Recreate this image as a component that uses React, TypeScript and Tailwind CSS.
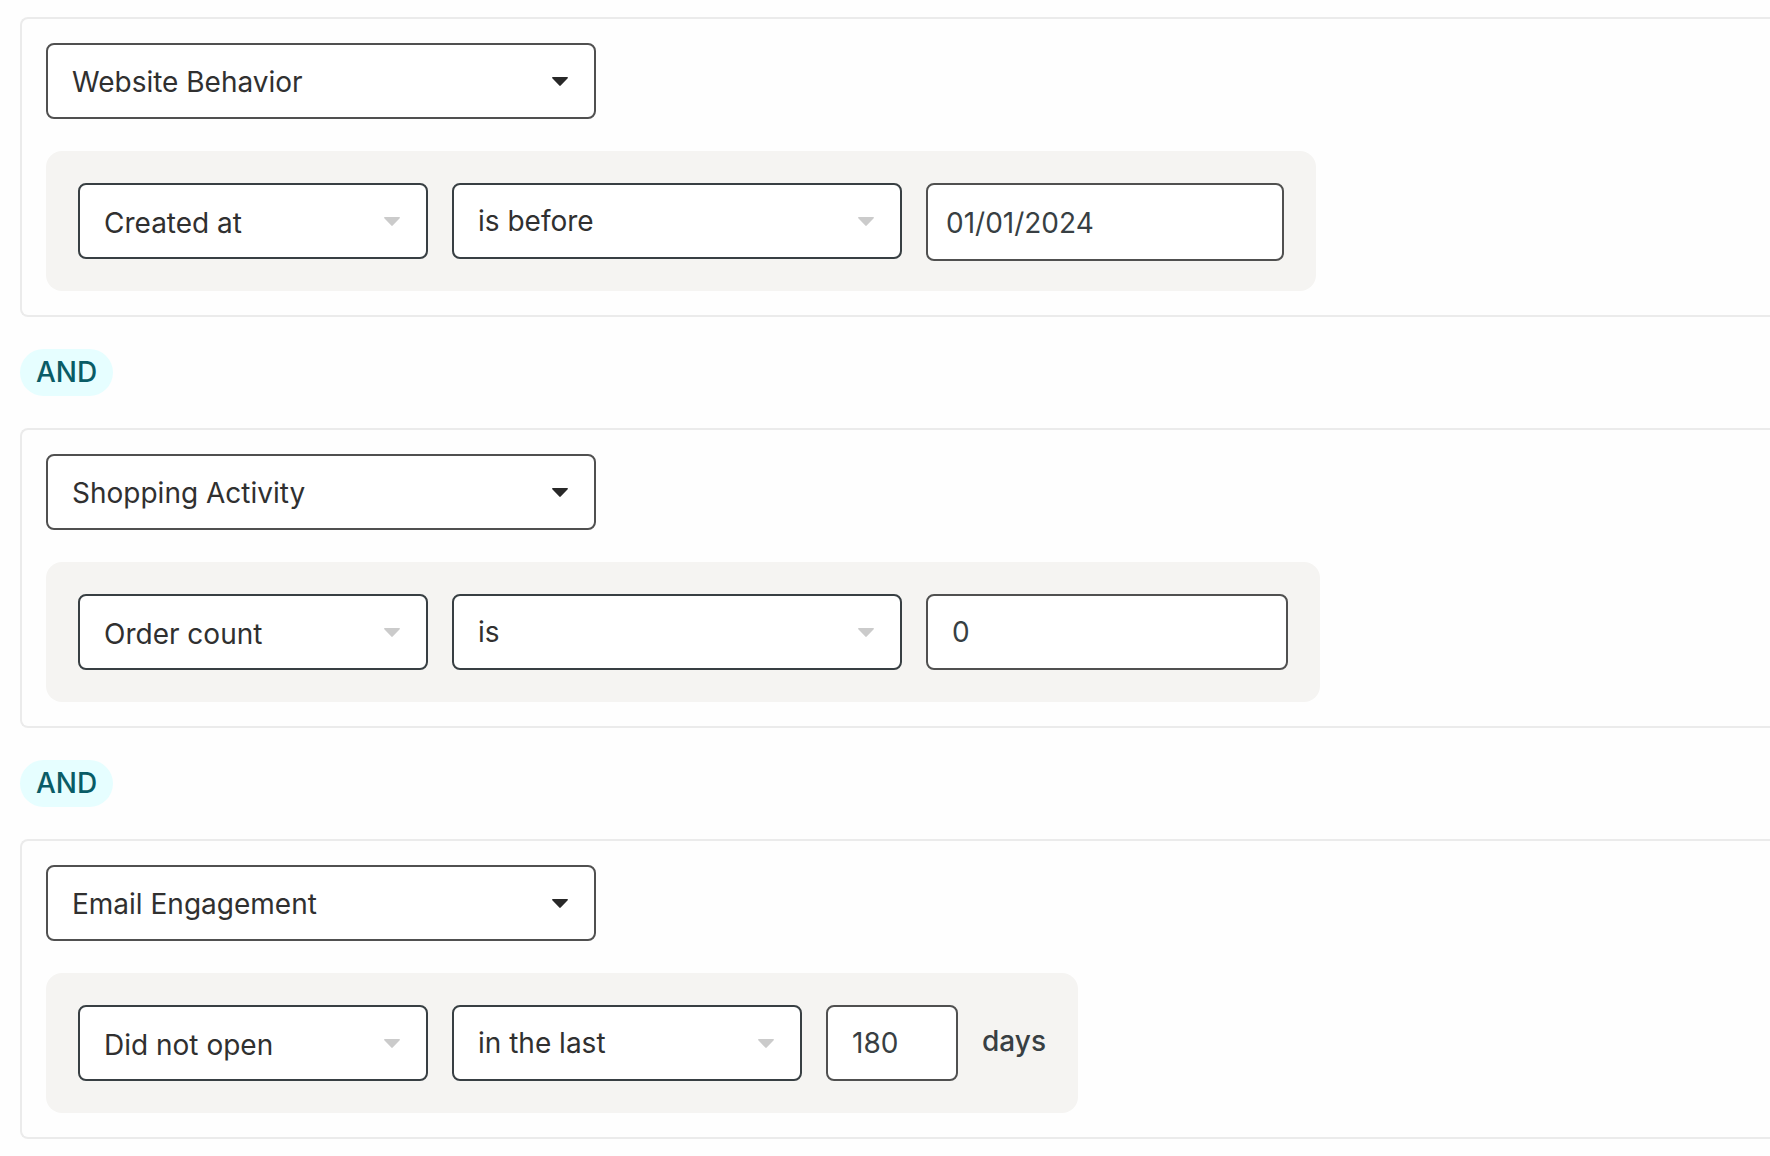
import { useState } from "react";
import type { ReactNode } from "react";

type Tone = "group" | "field" | "operator";

const selectStyles: Record<Tone, string> = {
  group: "border-[#505050] pt-0.5",
  field: "border-[#383f43] pt-1",
  operator: "border-[#383f43]",
};

function Dropdown({
  label,
  options,
  tone,
  width,
}: {
  label: string;
  options: string[];
  tone: Tone;
  width: string;
}) {
  const [value, setValue] = useState(options[0]);
  return (
    <div className={`relative ${width}`}>
      <select
        aria-label={label}
        value={value}
        onChange={(e) => setValue(e.target.value)}
        className={`block h-[76px] w-full appearance-none rounded-lg border-2 bg-white pr-16 pl-6 text-[#303030] ${selectStyles[tone]}`}
      >
        {options.map((o) => (
          <option key={o}>{o}</option>
        ))}
      </select>
      <svg
        aria-hidden="true"
        viewBox="0 0 16 9"
        className={`pointer-events-none absolute top-[34px] right-7 h-[9px] w-4 ${
          tone === "group" ? "text-[#282828]" : "text-[#cbcbcb]"
        }`}
      >
        <path
          fill="currentColor"
          d="M.8 0h14.4c.7 0 1 .8.5 1.300L8.700 8.600a1 1 0 0 1-1.400 0L.3 1.300C-.2.8.1 0 .8 0Z"
        />
      </svg>
    </div>
  );
}

function TextField({ label, initial, className }: { label: string; initial: string; className: string }) {
  const [value, setValue] = useState(initial);
  return (
    <input
      type="text"
      aria-label={label}
      value={value}
      onChange={(e) => setValue(e.target.value)}
      className={`rounded-lg border-2 border-[#505050] bg-white text-[#383f43] ${className}`}
    />
  );
}

function ConditionCard({ category, children }: { category: string; children: ReactNode }) {
  return (
    <section className="flex flex-col items-start gap-8 rounded-l-lg border-2 border-r-0 border-[#ebebeb] p-6">
      <Dropdown
        label="Condition category"
        tone="group"
        width="w-[550px]"
        options={[category, ...categories.filter((c) => c !== category)]}
      />
      <div className="flex items-start gap-6 rounded-2xl bg-[#f5f4f2] p-8">{children}</div>
    </section>
  );
}

function AndBadge() {
  return (
    <div className="my-8 flex">
      <span className="rounded-full bg-[#e6feff] px-4 pb-px leading-[46px] font-medium text-[#0a5c66]">AND</span>
    </div>
  );
}

const categories = ["Website Behavior", "Shopping Activity", "Email Engagement"];

export default function App() {
  return (
    <main className="min-h-screen bg-[#fefefe] pt-[17px] pb-4 pl-5 font-['Inter',sans-serif] text-[28px]">
      <ConditionCard category="Website Behavior">
        <Dropdown label="Field" tone="field" width="w-[350px]" options={["Created at", "Updated at"]} />
        <Dropdown label="Operator" tone="operator" width="w-[450px]" options={["is before", "is after"]} />
        <TextField label="Date" initial="01/01/2024" className="-mb-0.5 h-[78px] w-[358px] px-[18px] pt-0.5" />
      </ConditionCard>
      <AndBadge />
      <ConditionCard category="Shopping Activity">
        <Dropdown label="Field" tone="field" width="w-[350px]" options={["Order count", "Order total"]} />
        <Dropdown label="Operator" tone="operator" width="w-[450px]" options={["is", "is not"]} />
        <TextField label="Count" initial="0" className="h-[76px] w-[362px] px-6" />
      </ConditionCard>
      <AndBadge />
      <ConditionCard category="Email Engagement">
        <Dropdown label="Field" tone="field" width="w-[350px]" options={["Did not open", "Opened"]} />
        <Dropdown label="Operator" tone="operator" width="w-[350px]" options={["in the last", "before"]} />
        <TextField label="Number of days" initial="180" className="h-[76px] w-[132px] px-6" />
        <span className="leading-[72px] font-medium text-[#383f43]">days</span>
      </ConditionCard>
    </main>
  );
}
